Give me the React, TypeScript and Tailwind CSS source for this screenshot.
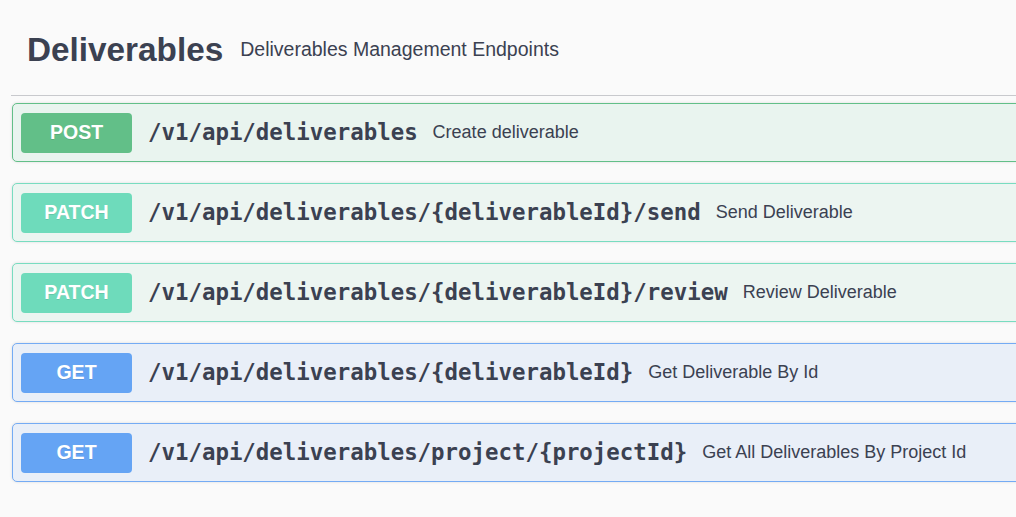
import React from "react";

type Method = "POST" | "PATCH" | "GET";

const ops: { method: Method; path: string; summary: string }[] = [
  { method: "POST", path: "/v1/api/deliverables", summary: "Create deliverable" },
  { method: "PATCH", path: "/v1/api/deliverables/{deliverableId}/send", summary: "Send Deliverable" },
  { method: "PATCH", path: "/v1/api/deliverables/{deliverableId}/review", summary: "Review Deliverable" },
  { method: "GET", path: "/v1/api/deliverables/{deliverableId}", summary: "Get Deliverable By Id" },
  { method: "GET", path: "/v1/api/deliverables/project/{projectId}", summary: "Get All Deliverables By Project Id" },
];

const rowStyles: Record<Method, string> = {
  POST: "border-[#62bf88] bg-[#e9f4ef]",
  PATCH: "border-[#78dcc0] bg-[#ecf5f1]",
  GET: "border-[#74abf4] bg-[#e9eff8]",
};

const badgeStyles: Record<Method, string> = {
  POST: "bg-[#62bf88]",
  PATCH: "bg-[#6edbbb]",
  GET: "bg-[#65a4f4]",
};

function OperationRow({ method, path, summary }: { method: Method; path: string; summary: string }) {
  return (
    <div
      className={`mb-[21px] flex h-[59px] items-center rounded-[5px] border-[1.5px] pl-[8px] shadow-[0_0_3px_rgba(0,0,0,0.12)] ${rowStyles[method]}`}
    >
      <span
        className={`flex h-[40px] w-[111px] shrink-0 items-center justify-center rounded-[4px] text-[19.5px] font-bold text-white [text-shadow:0_1px_0_rgba(0,0,0,0.1)] ${badgeStyles[method]}`}
        style={{ fontFamily: '"Liberation Sans", Arial, sans-serif' }}
      >
        {method}
      </span>
      <span
        className="whitespace-nowrap pl-[16px] pr-[15px] text-[22.4px] font-bold text-[#3b4151]"
        style={{ fontFamily: '"DejaVu Sans Mono", monospace' }}
      >
        {path}
      </span>
      <span
        className="whitespace-nowrap text-[18px] text-[#3b4151]"
        style={{ fontFamily: '"Liberation Sans", Arial, sans-serif' }}
      >
        {summary}
      </span>
    </div>
  );
}

export default function App() {
  return (
    <div className="h-[517px] w-[1016px] overflow-hidden bg-[#fafafa]">
      <div className="ml-[12px] w-[1100px]">
        <div
          className="-ml-[1px] flex items-center border-b-[1.5px] border-[#c8c9cd] pb-[25px] pl-[16px] pt-[30px]"
          style={{ fontFamily: '"Liberation Sans", Arial, sans-serif' }}
        >
          <h3 className="text-[33.3px] font-bold leading-[40px] text-[#3b4151]">Deliverables</h3>
          <small className="ml-[17px] text-[19.5px] text-[#3b4151]">Deliverables Management Endpoints</small>
        </div>
        <div className="pt-[7px]">
          {ops.map((op) => (
            <OperationRow key={op.path} {...op} />
          ))}
        </div>
      </div>
    </div>
  );
}
